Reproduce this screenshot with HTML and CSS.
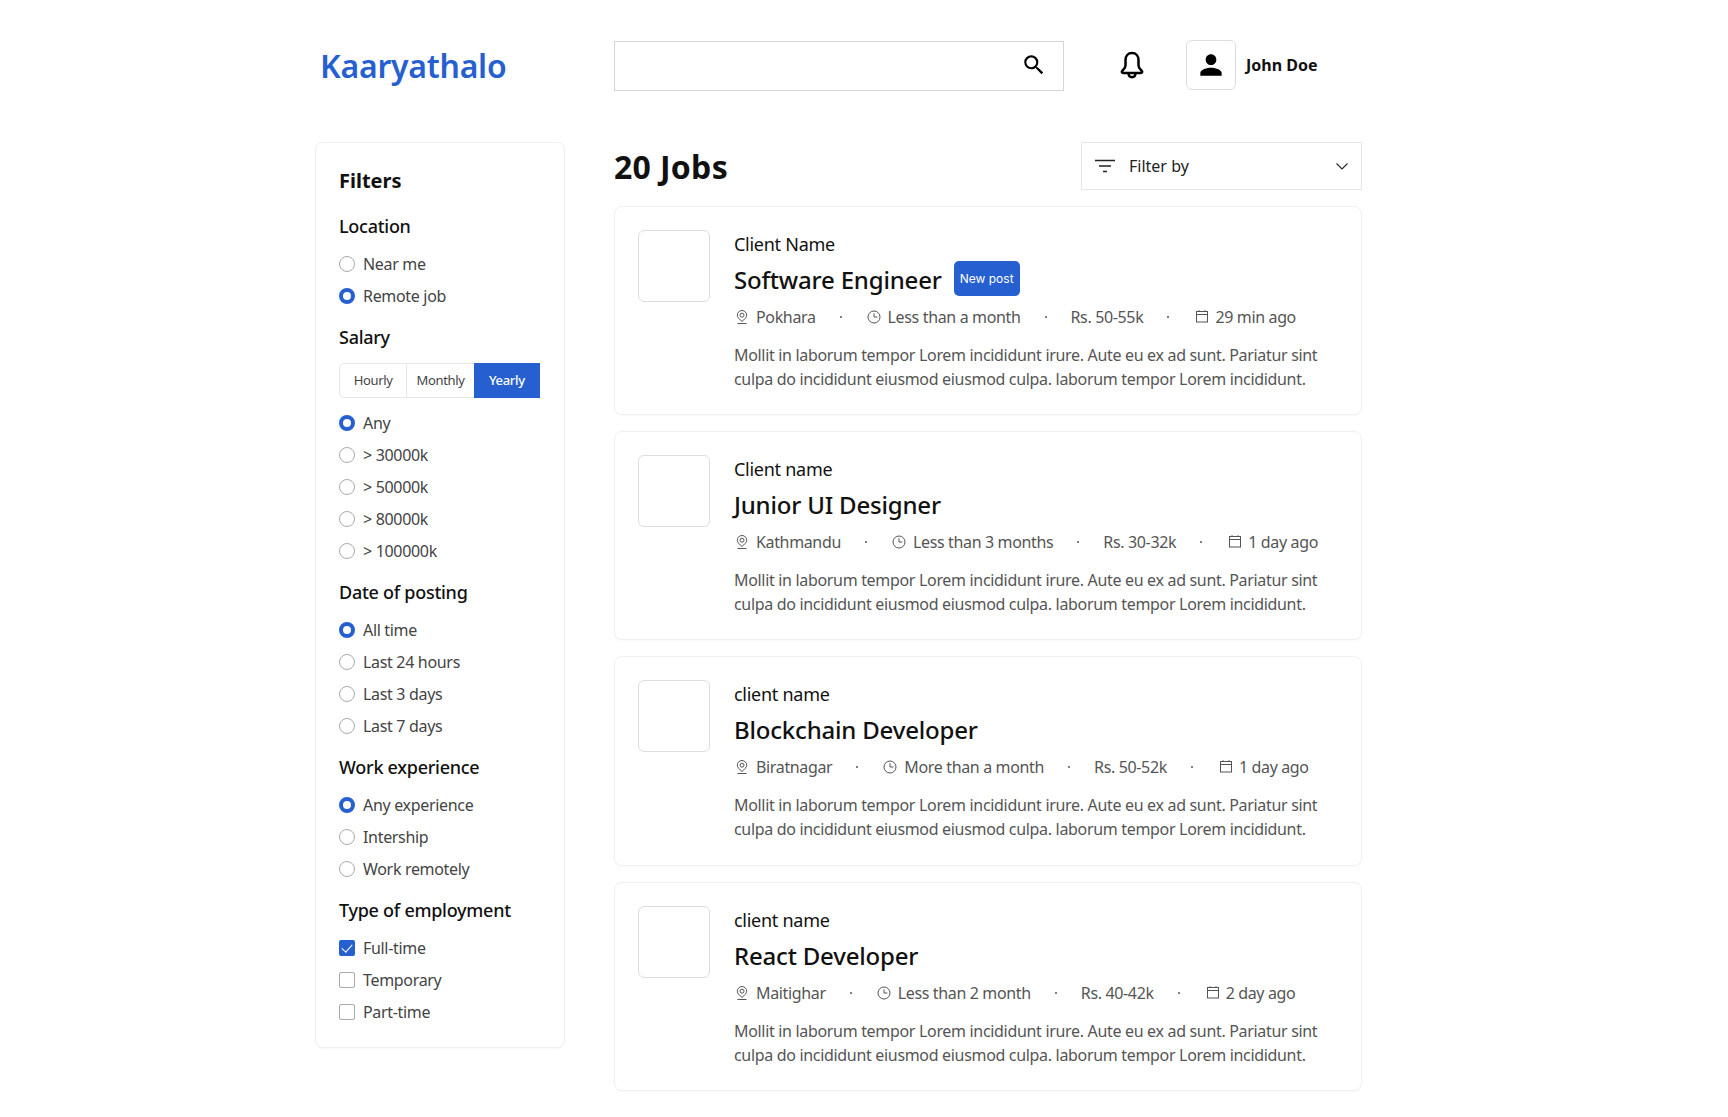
FILE: index.html
```html
<!DOCTYPE html>
<html lang="en">
<head>
<meta charset="UTF-8">
<meta name="viewport" content="width=device-width, initial-scale=1.0">
<title>Kaaryathalo</title>
<link rel="stylesheet" href="styles.css">
</head>
<body>

<svg class="sprite" aria-hidden="true">
    <symbol id="i-pin" viewBox="0 0 16 16"><g fill="none" stroke="currentColor" stroke-width="1"><path d="M8 12.500C5.500 10.300 3.300 8.500 3.300 6.200a4.700 4.700 0 0 1 9.400 0c0 2.300-2.200 4.100-4.700 6.300z"/><circle cx="8" cy="6.200" r="2"/><path d="M3.500 14.500h9"/></g></symbol>
    <symbol id="i-clock" viewBox="0 0 16 16"><g fill="none" stroke="currentColor" stroke-width="1"><circle cx="8" cy="8" r="6"/><path d="M8 4.300V8h3.400"/></g></symbol>
    <symbol id="i-cal" viewBox="0 0 16 16"><g fill="none" stroke="currentColor" stroke-width="1"><rect x="3.500" y="2.500" width="11" height="10.500"/><path d="M3.500 5.500h11M6 1.200V3M12 1.200V3"/></g></symbol>
</svg>

<div class="page">

    <div class="header">
        <div class="logo">Kaaryathalo</div>
        <div class="search">
            <input class="search-input" type="text">
            <svg class="search-icon" viewBox="0 0 24 24" width="26" height="26"><path d="M15.500 14h-.79l-.28-.27A6.470 6.470 0 0 0 16 9.500 6.500 6.500 0 1 0 9.500 16c1.610 0 3.090-.59 4.230-1.570l.27.28v.79l5 4.990L20.490 19l-4.990-5zm-6 0C7.010 14 5 11.990 5 9.500S7.010 5 9.500 5 14 7.010 14 9.500 11.990 14 9.500 14z"/></svg>
        </div>
        <svg class="bell" viewBox="0 0 26 28" width="26" height="28"><path d="M13 2c-4 0-6.500 3-6.500 7v5.500c0 2.500-2 4-3.400 5.600-.6.700-.2 1.900.9 1.900h18c1.100 0 1.500-1.200.9-1.900-1.400-1.600-3.400-3.100-3.400-5.600V9c0-4-2.500-7-6.500-7z" fill="none" stroke="#000" stroke-width="2.500" stroke-linejoin="round"/><path d="M9.500 22.500c.2 2.400 1.500 3.700 3.500 3.700s3.300-1.300 3.500-3.700" fill="none" stroke="#000" stroke-width="2.500"/></svg>
        <div class="avatar">
            <svg viewBox="0 0 24 24" width="32" height="32"><path d="M12 12c2.210 0 4-1.790 4-4s-1.790-4-4-4-4 1.790-4 4 1.790 4 4 4zm0 2c-2.670 0-8 1.340-8 4v2h16v-2c0-2.660-5.330-4-8-4z"/></svg>
        </div>
        <div class="user-name">John Doe</div>
    </div>

    <div class="content">

        <form class="sidebar">
            <h2 class="sidebar-title">Filters</h2>

            <div class="group first">
                <h3>Location</h3>
                <label class="opt"><input type="radio" name="loc">Near me</label>
                <label class="opt"><input type="radio" name="loc" checked>Remote job</label>
            </div>

            <div class="group">
                <h3>Salary</h3>
                <div class="tabs">
                    <div class="tab">Hourly</div>
                    <div class="tab">Monthly</div>
                    <div class="tab active">Yearly</div>
                </div>
                <label class="opt"><input type="radio" name="sal" checked>Any</label>
                <label class="opt"><input type="radio" name="sal">&gt; 30000k</label>
                <label class="opt"><input type="radio" name="sal">&gt; 50000k</label>
                <label class="opt"><input type="radio" name="sal">&gt; 80000k</label>
                <label class="opt"><input type="radio" name="sal">&gt; 100000k</label>
            </div>

            <div class="group">
                <h3>Date of posting</h3>
                <label class="opt"><input type="radio" name="date" checked>All time</label>
                <label class="opt"><input type="radio" name="date">Last 24 hours</label>
                <label class="opt"><input type="radio" name="date">Last 3 days</label>
                <label class="opt"><input type="radio" name="date">Last 7 days</label>
            </div>

            <div class="group">
                <h3>Work experience</h3>
                <label class="opt"><input type="radio" name="exp" checked>Any experience</label>
                <label class="opt"><input type="radio" name="exp">Intership</label>
                <label class="opt"><input type="radio" name="exp">Work remotely</label>
            </div>

            <div class="group">
                <h3>Type of employment</h3>
                <label class="opt"><input type="checkbox" checked>Full-time</label>
                <label class="opt"><input type="checkbox">Temporary</label>
                <label class="opt"><input type="checkbox">Part-time</label>
            </div>
        </form>

        <div class="main">
            <div class="main-top">
                <h1 class="count">20 Jobs</h1>
                <div class="filter-by">
                    <svg viewBox="0 0 24 24" width="24" height="24"><path d="M2 6.500h20M6 12h12M10 17.500h4" fill="none" stroke="#222" stroke-width="1.300"/></svg>
                    <span>Filter by</span>
                    <svg class="chev" viewBox="0 0 16 16" width="16" height="16"><path d="M2.500 5.500 8 11l5.500-5.500" fill="none" stroke="#222" stroke-width="1.100"/></svg>
                </div>
            </div>

            <div class="card">
                <div class="card-logo"></div>
                <div class="card-body">
                    <div class="client">Client Name</div>
                    <div class="title-row">
                        <div class="job-title">Software Engineer</div>
                        <div class="badge">New post</div>
                    </div>
                    <div class="meta">
                        <span class="meta-item"><svg><use href="#i-pin"/></svg>Pokhara</span><i></i>
                        <span class="meta-item"><svg><use href="#i-clock"/></svg>Less than a month</span><i></i>
                        <span class="meta-item">Rs. 50-55k</span><i></i>
                        <span class="meta-item"><svg><use href="#i-cal"/></svg>29 min ago</span>
                    </div>
                    <p class="desc">Mollit in laborum tempor Lorem incididunt irure. Aute eu ex ad sunt. Pariatur sint culpa do incididunt eiusmod eiusmod culpa. laborum tempor Lorem incididunt.</p>
                </div>
            </div>

            <div class="card">
                <div class="card-logo"></div>
                <div class="card-body">
                    <div class="client">Client name</div>
                    <div class="title-row">
                        <div class="job-title">Junior UI Designer</div>
                    </div>
                    <div class="meta">
                        <span class="meta-item"><svg><use href="#i-pin"/></svg>Kathmandu</span><i></i>
                        <span class="meta-item"><svg><use href="#i-clock"/></svg>Less than 3 months</span><i></i>
                        <span class="meta-item">Rs. 30-32k</span><i></i>
                        <span class="meta-item"><svg><use href="#i-cal"/></svg>1 day ago</span>
                    </div>
                    <p class="desc">Mollit in laborum tempor Lorem incididunt irure. Aute eu ex ad sunt. Pariatur sint culpa do incididunt eiusmod eiusmod culpa. laborum tempor Lorem incididunt.</p>
                </div>
            </div>

            <div class="card">
                <div class="card-logo"></div>
                <div class="card-body">
                    <div class="client">client name</div>
                    <div class="title-row">
                        <div class="job-title">Blockchain Developer</div>
                    </div>
                    <div class="meta">
                        <span class="meta-item"><svg><use href="#i-pin"/></svg>Biratnagar</span><i></i>
                        <span class="meta-item"><svg><use href="#i-clock"/></svg>More than a month</span><i></i>
                        <span class="meta-item">Rs. 50-52k</span><i></i>
                        <span class="meta-item"><svg><use href="#i-cal"/></svg>1 day ago</span>
                    </div>
                    <p class="desc">Mollit in laborum tempor Lorem incididunt irure. Aute eu ex ad sunt. Pariatur sint culpa do incididunt eiusmod eiusmod culpa. laborum tempor Lorem incididunt.</p>
                </div>
            </div>

            <div class="card">
                <div class="card-logo"></div>
                <div class="card-body">
                    <div class="client">client name</div>
                    <div class="title-row">
                        <div class="job-title">React Developer</div>
                    </div>
                    <div class="meta">
                        <span class="meta-item"><svg><use href="#i-pin"/></svg>Maitighar</span><i></i>
                        <span class="meta-item"><svg><use href="#i-clock"/></svg>Less than 2 month</span><i></i>
                        <span class="meta-item">Rs. 40-42k</span><i></i>
                        <span class="meta-item"><svg><use href="#i-cal"/></svg>2 day ago</span>
                    </div>
                    <p class="desc">Mollit in laborum tempor Lorem incididunt irure. Aute eu ex ad sunt. Pariatur sint culpa do incididunt eiusmod eiusmod culpa. laborum tempor Lorem incididunt.</p>
                </div>
            </div>
        </div>
    </div>
</div>

</body>
</html>
```

FILE: styles.css
```css
* {
    box-sizing: border-box;
}
body {
    margin: 0;
    background-color: white;
    color: #111;
    font-family: "Noto Sans", sans-serif;
    letter-spacing: -0.02em;
}
.sprite {
    display: none;
}
.page {
    width: 1047px;
    margin-left: 315px;
}

/* Header */
.header {
    display: flex;
    align-items: center;
    height: 142px;
    padding-bottom: 11px;
}
.logo {
    width: 299px;
    padding-left: 5px;
    color: #2660d0;
    font-size: 32px;
    font-weight: 600;
    letter-spacing: -0.008em;
}
.search {
    position: relative;
    width: 450px;
    height: 50px;
}
.search-input {
    width: 100%;
    height: 100%;
    border: 1px solid #d6d6d6;
    outline: none;
}
.search-icon {
    position: absolute;
    top: 11px;
    right: 17px;
}
.bell {
    margin-left: 55px;
    margin-top: -2px;
}
.avatar {
    display: flex;
    align-items: center;
    justify-content: center;
    width: 50px;
    height: 50px;
    margin-left: 41px;
    margin-top: -2px;
    border: 1px solid #ddd;
    border-radius: 6px;
}
.user-name {
    margin-left: 10px;
    margin-top: -2px;
    font-size: 16px;
    font-weight: 700;
    letter-spacing: 0;
}

.content {
    display: flex;
    align-items: flex-start;
    gap: 49px;
}

/* Sidebar */
.sidebar {
    width: 250px;
    padding: 23px;
    border: 1px solid #f0f0f0;
    border-radius: 8px;
    box-shadow: 0 1px 2px rgba(0, 0, 0, 0.03);
}
.sidebar-title {
    margin: 0;
    font-size: 20px;
    font-weight: 700;
    line-height: 30px;
    letter-spacing: 0;
}
.group {
    margin-top: 16px;
}
.group.first {
    margin-top: 17px;
}
.group h3 {
    margin: 0 0 12px;
    font-size: 18px;
    font-weight: 500;
    line-height: 27px;
    letter-spacing: -0.015em;
}
.opt {
    display: flex;
    align-items: center;
    gap: 8px;
    height: 24px;
    margin-top: 8px;
    color: #444;
    font-size: 16px;
}
.group h3 + .opt {
    margin-top: 0;
}
.opt input {
    flex: none;
    width: 16px;
    height: 16px;
    margin: 0;
    appearance: none;
    border: 1px solid #aaa;
    border-radius: 50%;
}
.opt input:checked {
    border: 4px solid #2660d0;
}
.opt input[type="checkbox"] {
    border-radius: 2px;
}
.opt input[type="checkbox"]:checked {
    border: none;
    background-color: #2660d0;
    position: relative;
}
.opt input[type="checkbox"]:checked::after {
    content: "";
    position: absolute;
    top: 2px;
    left: 5px;
    width: 5px;
    height: 9px;
    border: solid white;
    border-width: 0 1.500px 1.500px 0;
    transform: rotate(42deg);
}
.tabs {
    display: flex;
    width: 201px;
    height: 35px;
    margin-bottom: 13px;
    border: 1px solid #e6e6e6;
    border-radius: 5px 0 0 5px;
}
.tab {
    flex: 1;
    display: flex;
    align-items: center;
    justify-content: center;
    padding-bottom: 2px;
    border-right: 1px solid #e6e6e6;
    color: #444;
    font-size: 13px;
}
.tab.active {
    margin: -1px;
    border: none;
    background-color: #2660d0;
    color: white;
    font-weight: 500;
}

/* Jobs */
.main {
    width: 748px;
}
.main-top {
    display: flex;
    align-items: center;
    justify-content: space-between;
    height: 48px;
    margin-bottom: 16px;
}
.count {
    margin: 0;
    font-size: 32px;
    font-weight: 700;
    letter-spacing: 0.01em;
}
.filter-by {
    display: flex;
    align-items: center;
    gap: 12px;
    width: 281px;
    height: 48px;
    padding: 0 11px;
    border: 1px solid #e6e6e6;
    font-size: 16px;
    letter-spacing: 0;
    color: #222;
}
.chev {
    margin-left: auto;
}
.card {
    display: flex;
    gap: 24px;
    height: 209.200px;
    margin-bottom: 16px;
    padding: 23px;
    border: 1px solid #f0f0f0;
    border-radius: 8px;
    box-shadow: 0 1px 2px rgba(0, 0, 0, 0.03);
}
.card-logo {
    flex: none;
    width: 72px;
    height: 72px;
    border: 1px solid #ddd;
    border-radius: 6px;
}
.card-body {
    flex: 1;
    padding-top: 1px;
}
.client {
    font-size: 18px;
    line-height: 27px;
    letter-spacing: -0.015em;
}
.title-row {
    display: flex;
    align-items: center;
    gap: 12px;
    height: 35px;
    margin-top: 4px;
}
.job-title {
    font-size: 24px;
    font-weight: 500;
    letter-spacing: -0.008em;
}
.badge {
    display: flex;
    align-items: center;
    justify-content: center;
    width: 66px;
    height: 35px;
    margin-top: -2px;
    border-radius: 5px;
    background-color: #2660d0;
    color: white;
    font-family: Inter, sans-serif;
    font-size: 12px;
    letter-spacing: 0;
}
.meta {
    display: flex;
    align-items: center;
    gap: 24px;
    height: 24px;
    margin-top: 8px;
    color: #555;
    font-size: 16px;
    letter-spacing: -0.022em;
}
.meta i {
    width: 2px;
    height: 2px;
    border-radius: 50%;
    background-color: #555;
}
.meta-item {
    display: flex;
    align-items: center;
    gap: 6px;
}
.meta-item svg {
    width: 16px;
    height: 16px;
}
.desc {
    margin: 14px 0 0;
    color: #555;
    font-size: 16px;
    line-height: 24px;
}
```
